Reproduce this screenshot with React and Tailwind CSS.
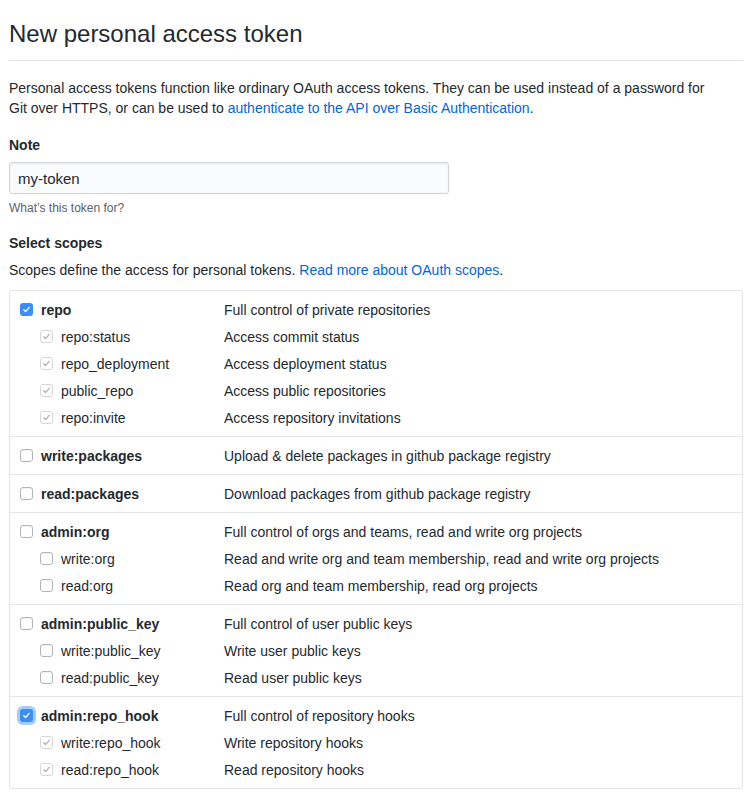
import React from 'react';

const groups = [
  {
    name: 'repo',
    desc: 'Full control of private repositories',
    state: 'checked',
    children: [
      ['repo:status', 'Access commit status'],
      ['repo_deployment', 'Access deployment status'],
      ['public_repo', 'Access public repositories'],
      ['repo:invite', 'Access repository invitations'],
    ],
  },
  { name: 'write:packages', desc: 'Upload & delete packages in github package registry', state: 'off', children: [] },
  { name: 'read:packages', desc: 'Download packages from github package registry', state: 'off', children: [] },
  {
    name: 'admin:org',
    desc: 'Full control of orgs and teams, read and write org projects',
    state: 'off',
    children: [
      ['write:org', 'Read and write org and team membership, read and write org projects'],
      ['read:org', 'Read org and team membership, read org projects'],
    ],
  },
  {
    name: 'admin:public_key',
    desc: 'Full control of user public keys',
    state: 'off',
    children: [
      ['write:public_key', 'Write user public keys'],
      ['read:public_key', 'Read user public keys'],
    ],
  },
  {
    name: 'admin:repo_hook',
    desc: 'Full control of repository hooks',
    state: 'focused',
    children: [
      ['write:repo_hook', 'Write repository hooks'],
      ['read:repo_hook', 'Read repository hooks'],
    ],
  },
];

const Check = ({ color }) => (
  <svg width="9" height="9" viewBox="0 0 9 9" fill="none">
    <path d="M1.8 4.8 L3.6 6.6 L7.2 2.4" stroke={color} strokeWidth="1.4" strokeLinecap="round" strokeLinejoin="round" />
  </svg>
);

const Box = ({ state }) => {
  if (state === 'checked' || state === 'focused') {
    return (
      <span
        className={
          'flex items-center justify-center w-[13px] h-[13px] rounded-[3px] bg-[#3a8ef8] ' +
          (state === 'focused' ? 'shadow-[0_0_0_3px_rgba(90,160,250,0.55)]' : '')
        }
      >
        <Check color="#ffffff" />
      </span>
    );
  }
  if (state === 'disabled') {
    return (
      <span className="flex items-center justify-center w-[13px] h-[13px] rounded-[3px] bg-white border border-[#d6d6d6]">
        <Check color="#b3b3b3" />
      </span>
    );
  }
  return (
    <span className="block w-[13px] h-[13px] rounded-[3px] bg-white border border-[#b4b4b4] shadow-[inset_0_1px_1px_rgba(0,0,0,0.06)]" />
  );
};

const Row = ({ label, desc, state, sub }) => (
  <div className="flex items-center h-[21px]">
    <div className={'flex items-center w-[214px] shrink-0 ' + (sub ? 'pl-[30px]' : 'pl-[10px]')}>
      <Box state={state} />
      <span className={'ml-[8px] ' + (sub ? '' : 'font-bold')}>{label}</span>
    </div>
    <div>{desc}</div>
  </div>
);

const App = () => {
  return (
    <div
      className="min-h-screen bg-white pl-[9px] pr-[10px] text-[14px] leading-[20px] text-[#24292e]"
      style={{ fontFamily: '"Liberation Sans", Arial, sans-serif' }}
    >
      <h2 className="pt-4 pb-2 text-[24px] leading-[36px] font-normal border-b border-[#e1e4e8]">
        New personal access token
      </h2>

      <p className="mt-[17px]">
        Personal access tokens function like ordinary OAuth access tokens. They can be used instead of a password for
        <br />
        Git over HTTPS, or can be used to{' '}
        <a href="#" className="text-[#0366d6]">authenticate to the API over Basic Authentication</a>.
      </p>

      <div className="mt-[17px] font-bold">Note</div>
      <input
        type="text"
        defaultValue="my-token"
        className="mt-[7px] block w-[440px] h-[32px] px-2 bg-[#fafbfc] border border-[#d1d5da] rounded-[3px] text-[15px] text-[#24292e] shadow-[inset_0_1px_2px_rgba(27,31,35,0.075)] outline-none"
      />
      <div className="mt-[6px] text-[12px] leading-[16px] text-[#586069]">What’s this token for?</div>

      <div className="mt-[17px] font-bold">Select scopes</div>
      <p className="mt-[7px]">
        Scopes define the access for personal tokens.{' '}
        <a href="#" className="text-[#0366d6]">Read more about OAuth scopes</a>.
      </p>

      <div className="mt-[10px] border border-[#e1e4e8] rounded-[3px]">
        {groups.map((g, i) => (
          <div
            key={g.name}
            className={'flex flex-col gap-[6px] py-[8px] ' + (i > 0 ? 'border-t border-[#e1e4e8]' : '')}
          >
            <Row label={g.name} desc={g.desc} state={g.state} />
            {g.children.map(([n, d]) => (
              <Row
                key={n}
                label={n}
                desc={d}
                sub
                state={g.state === 'off' ? 'off' : 'disabled'}
              />
            ))}
          </div>
        ))}
      </div>
    </div>
  );
};

export default App;
